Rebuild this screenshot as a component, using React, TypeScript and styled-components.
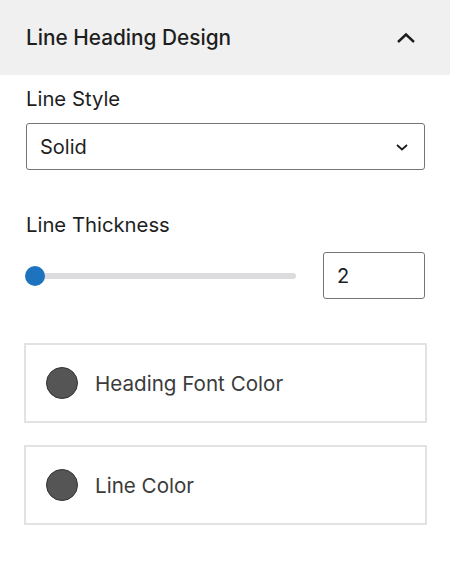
import styled, { createGlobalStyle } from "styled-components";

const GlobalStyle = createGlobalStyle`
  body {
    margin: 0;
    background: #ffffff;
    font-family: Inter, "Liberation Sans", sans-serif;
    color: #1e1e1e;
  }
`;

const Panel = styled.div`
  width: 450px;
  height: 561px;
  background: #ffffff;
`;

const Header = styled.div`
  height: 75px;
  background: #f0f0f0;
  display: flex;
  align-items: center;
  justify-content: space-between;
  padding: 0 34px 0 26px;
  box-sizing: border-box;
`;

const Title = styled.h2`
  margin: 0;
  font-size: 20.8px;
  font-weight: 500;
  color: #1e1e1e;
`;

const Body = styled.div`
  padding: 10px 24px 0 26px;
  display: flex;
  flex-direction: column;
`;

const Label = styled.div`
  font-size: 20.3px;
  color: #1e1e1e;
  line-height: 28px;
`;

const Field = styled.div<{ $gap: number }>`
  display: flex;
  flex-direction: column;
  gap: ${(p) => p.$gap}px;
  margin-bottom: 41px;
`;

const Select = styled.div`
  width: 399px;
  height: 47px;
  flex-shrink: 0;
  box-sizing: border-box;
  border: 1px solid #757575;
  border-radius: 3px;
  display: flex;
  align-items: center;
  justify-content: space-between;
  padding: 0 14px 0 13px;
  font-size: 20px;
  color: #1e1e1e;
`;

const RangeRow = styled.div`
  display: flex;
  align-items: center;
  justify-content: space-between;
  width: 399px;
  height: 47px;
`;

const Track = styled.div`
  position: relative;
  margin-left: 8px;
  width: 262px;
  height: 6px;
  border-radius: 3px;
  background: #dcdcde;
`;

const Thumb = styled.span`
  position: absolute;
  left: -9px;
  top: 50%;
  width: 20px;
  height: 20px;
  margin-top: -10px;
  border-radius: 50%;
  background: #1e73be;
`;

const NumberBox = styled.div`
  width: 102px;
  height: 47px;
  box-sizing: border-box;
  border: 1px solid #757575;
  border-radius: 3px;
  display: flex;
  align-items: center;
  padding-left: 13px;
  font-size: 20px;
`;

const ColorList = styled.div`
  display: flex;
  flex-direction: column;
  gap: 22px;
  margin: 3px 0 0 -2px;
`;

const ColorCard = styled.div`
  width: 403px;
  height: 80px;
  box-sizing: border-box;
  border: 2px solid #e2e2e2;
  display: flex;
  align-items: center;
  gap: 17px;
  padding-left: 20px;
`;

const Swatch = styled.span<{ $color: string }>`
  width: 32px;
  height: 32px;
  box-sizing: border-box;
  border-radius: 50%;
  background: ${(p) => p.$color};
  border: 1px solid #333;
`;

const ColorName = styled.span`
  font-size: 20.6px;
  color: #3c3c3c;
`;

const ChevronUp = () => (
  <svg width="20" height="12" viewBox="0 0 20 12" fill="none">
    <path d="M2 10 L10 2.5 L18 10" stroke="#1e1e1e" strokeWidth="2.4" />
  </svg>
);

const ChevronDown = () => (
  <svg width="16" height="10" viewBox="0 0 16 10" fill="none">
    <path d="M3 3 L8 7.5 L13 3" stroke="#1e1e1e" strokeWidth="1.8" />
  </svg>
);

const colors = [
  { name: "Heading Font Color", value: "#555555" },
  { name: "Line Color", value: "#555555" },
];

export default function App() {
  return (
    <>
      <GlobalStyle />
      <Panel>
        <Header>
          <Title>Line Heading Design</Title>
          <ChevronUp />
        </Header>
        <Body>
          <Field $gap={10}>
            <Label>Line Style</Label>
            <Select>
              <span>Solid</span>
              <ChevronDown />
            </Select>
          </Field>
          <Field $gap={13}>
            <Label>Line Thickness</Label>
            <RangeRow>
              <Track>
                <Thumb />
              </Track>
              <NumberBox>2</NumberBox>
            </RangeRow>
          </Field>
          <ColorList>
            {colors.map((c) => (
              <ColorCard key={c.name}>
                <Swatch $color={c.value} />
                <ColorName>{c.name}</ColorName>
              </ColorCard>
            ))}
          </ColorList>
        </Body>
      </Panel>
    </>
  );
}
